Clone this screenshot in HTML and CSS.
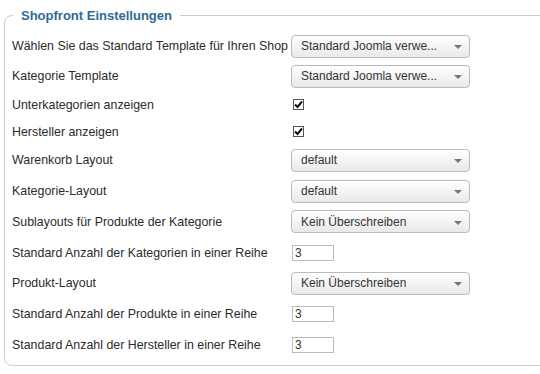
FILE: index.html
```html
<!DOCTYPE html>
<html lang="de">
<head>
  <meta charset="UTF-8" />
  <title>Shopfront Einstellungen</title>
  <link rel="stylesheet" href="styles.css">
</head>
<body>
  <fieldset class="settings">
    <legend>Shopfront Einstellungen</legend>

    <div class="row row-top">
      <label>Wählen Sie das Standard Template für Ihren Shop</label>
      <div class="select"><span>Standard Joomla verwe...</span><i class="arrow"></i></div>
    </div>
    <div class="row row-top">
      <label>Kategorie Template</label>
      <div class="select"><span>Standard Joomla verwe...</span><i class="arrow"></i></div>
    </div>
    <div class="row row-check">
      <label>Unterkategorien anzeigen</label>
      <span class="check"><svg width="9" height="9" viewBox="0 0 9 9"><path d="M1 4.5 L3.5 7 L8 1.5" fill="none" stroke="#111" stroke-width="2"/></svg></span>
    </div>
    <div class="row row-check">
      <label>Hersteller anzeigen</label>
      <span class="check"><svg width="9" height="9" viewBox="0 0 9 9"><path d="M1 4.5 L3.5 7 L8 1.5" fill="none" stroke="#111" stroke-width="2"/></svg></span>
    </div>
    <div class="row">
      <label>Warenkorb Layout</label>
      <div class="select"><span>default</span><i class="arrow"></i></div>
    </div>
    <div class="row">
      <label>Kategorie-Layout</label>
      <div class="select"><span>default</span><i class="arrow"></i></div>
    </div>
    <div class="row">
      <label>Sublayouts für Produkte der Kategorie</label>
      <div class="select"><span>Kein Überschreiben</span><i class="arrow"></i></div>
    </div>
    <div class="row">
      <label>Standard Anzahl der Kategorien in einer Reihe</label>
      <input class="num" type="text" value="3" />
    </div>
    <div class="row">
      <label>Produkt-Layout</label>
      <div class="select"><span>Kein Überschreiben</span><i class="arrow"></i></div>
    </div>
    <div class="row">
      <label>Standard Anzahl der Produkte in einer Reihe</label>
      <input class="num" type="text" value="3" />
    </div>
    <div class="row">
      <label>Standard Anzahl der Hersteller in einer Reihe</label>
      <input class="num" type="text" value="3" />
    </div>
  </fieldset>
</body>
</html>
```

FILE: styles.css
```css
body {
  margin: 0;
  padding: 8px 0 0 4px;
  font-family: 'Liberation Sans', Arial, sans-serif;
  font-size: 12px;
  color: #333;
  background: #fff;
  overflow: hidden;
}

.settings {
  margin: 0;
  width: 560px;
  border: 1px solid #ccc;
  border-radius: 8px;
  padding: 8px 0 5px 7px;
  box-sizing: border-box;
}

.settings legend {
  margin-left: 1px;
  padding: 0 8px;
  font-size: 13px;
  font-weight: bold;
  color: #2f6a95;
}

.row {
  display: flex;
  align-items: center;
  height: 30.75px;
}

.row-top {
  height: 30px;
}

.row-check {
  height: 27px;
}

.row label {
  width: 279px;
  flex-shrink: 0;
  font-size: 12.4px;
  color: #2b2b2b;
}

.select {
  width: 179px;
  height: 23px;
  box-sizing: border-box;
  border: 1px solid #bbb;
  border-radius: 4px;
  background: linear-gradient(to bottom, #fff, #f4f4f4 50%, #e9e9e9);
  display: flex;
  align-items: center;
  justify-content: space-between;
  padding: 0 7px 0 9px;
  color: #333;
}

.arrow {
  width: 0;
  height: 0;
  border-left: 4px solid transparent;
  border-right: 4px solid transparent;
  border-top: 4px solid #777;
  margin-top: 2px;
}

.check {
  width: 11px;
  height: 11px;
  box-sizing: border-box;
  border: 1px solid #555;
  background: #fff;
  display: flex;
  align-items: center;
  justify-content: center;
  margin-left: 2px;
}

.num {
  width: 42px;
  height: 16px;
  box-sizing: border-box;
  border: 1px solid #bbb;
  padding: 0 2px;
  margin: 0 0 0 1px;
  font-family: inherit;
  font-size: 12px;
  color: #333;
  outline: none;
}
```
